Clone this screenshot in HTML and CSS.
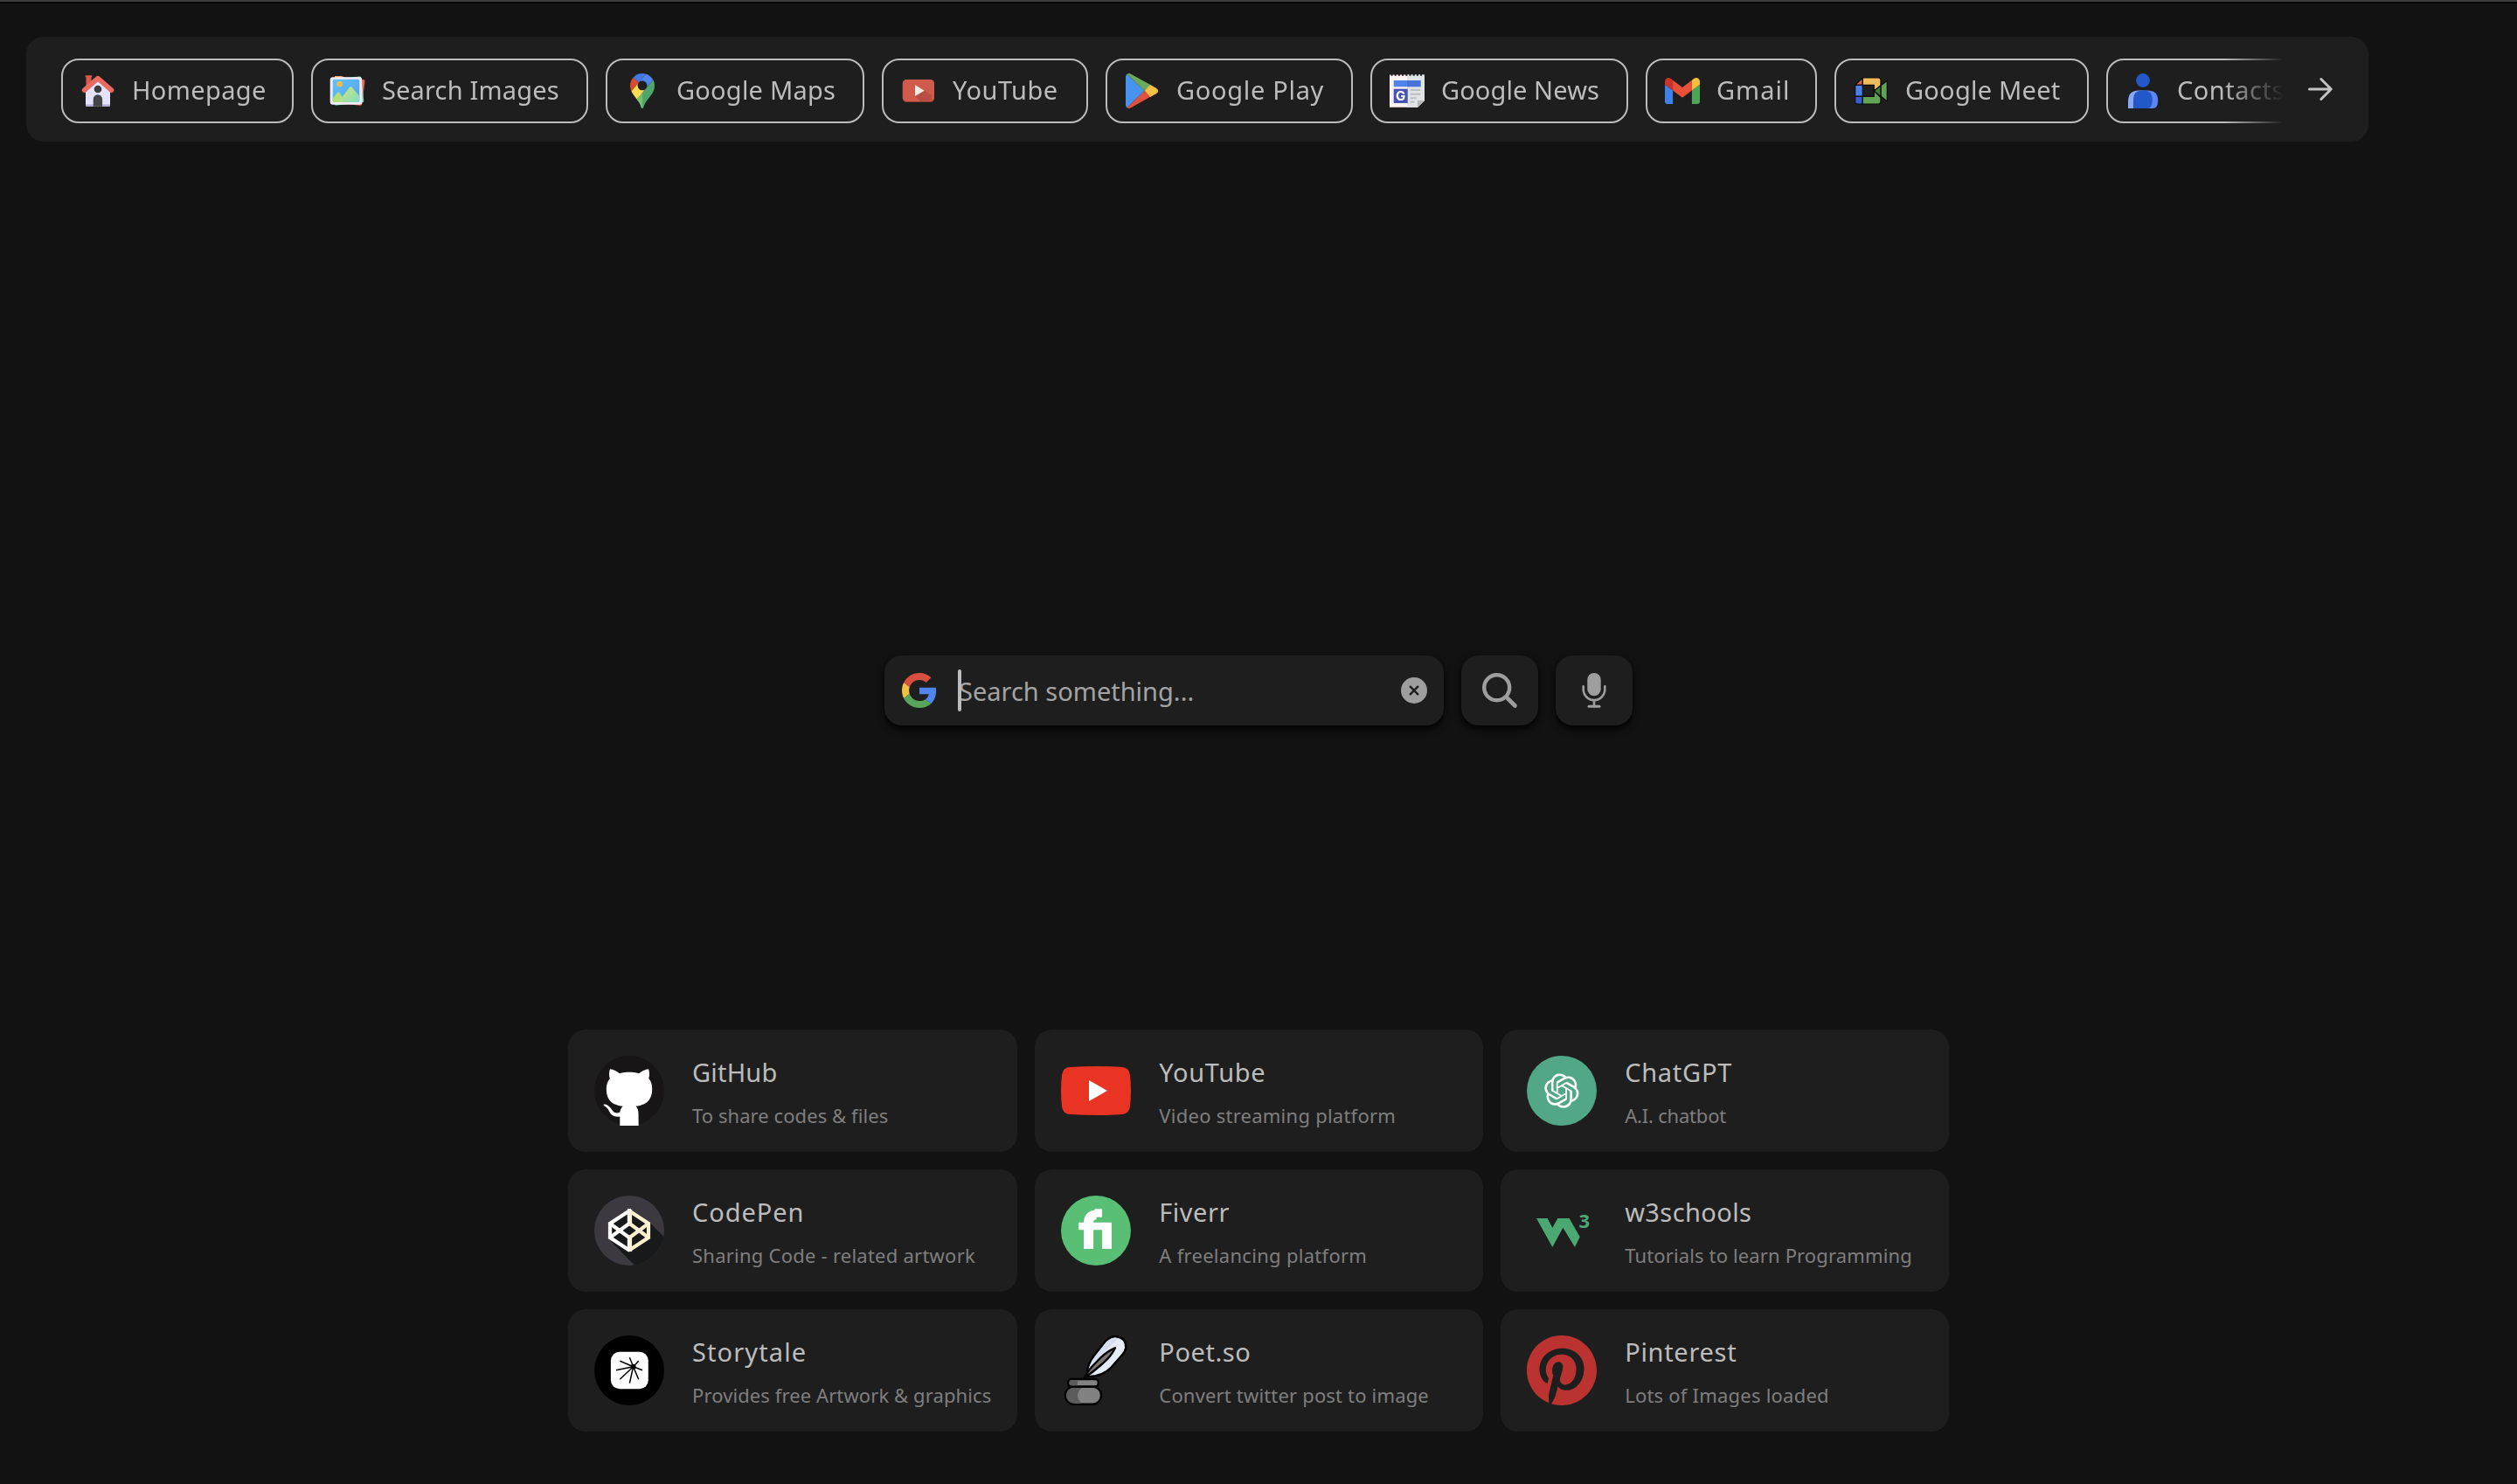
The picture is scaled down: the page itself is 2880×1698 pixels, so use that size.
FILE: index.html
```html
<!DOCTYPE html>
<html lang="en">
<head>
<meta charset="utf-8">
<title>New Tab</title>
<link rel="stylesheet" href="styles.css">
</head>
<body>
<nav class="shortcuts">
  <div class="shortcut-track">
    <a class="pill pill-home">
      <svg class="pill-icon" viewBox="0 0 40 40">
        <path fill="#d9584d" d="M5.7 2.3h7.6v2H12.500v11h-6v-11h-.8z"/>
        <path fill="#e4e2fd" d="M6 17 20 7l14 10v19.500q0 1.200-1.200 1.200H7.200Q6 37.700 6 36.500z"/>
        <path fill="#b3b1d6" d="M6 35.500h28v1q0 1.200-1.200 1.200H7.200Q6 37.700 6 36.500z"/>
        <circle cx="20" cy="18" r="4.300" fill="#3d3d40"/>
        <path fill="#454547" d="M14.700 37.700V29.500a5.200 5.200 0 0 1 10.400 0v8.200z"/>
        <path fill="none" stroke="#e96a5f" stroke-width="5.600" stroke-linecap="round" stroke-linejoin="round" d="M4.600 19.200 20 5.600l15.500 13.600"/>
      </svg>
      <span class="pill-label">Homepage</span>
    </a>
    <a class="pill pill-images">
      <svg class="pill-icon" viewBox="0 0 40 40">
        <defs><linearGradient id="sky" x1="0" y1="0" x2="1" y2="1"><stop offset="0" stop-color="#5fc4f6"/><stop offset="1" stop-color="#559ff0"/></linearGradient>
        <linearGradient id="hill" x1="0" y1="0" x2="1" y2="1"><stop offset="0" stop-color="#d9e66e"/><stop offset="1" stop-color="#7fdcc6"/></linearGradient></defs>
        <rect x="4" y="5" width="34" height="30" rx="2" fill="#e5694f" transform="rotate(7 21 20)"/>
        <rect x="3" y="5" width="34" height="30" rx="2" fill="#84d8b4" transform="rotate(-6 21 20)"/>
        <path fill="#f0a45e" d="M5 3h8l4 2H5z"/>
        <rect x="-.3" y="4.300" width="36.500" height="31.400" rx="3" fill="#f1ecfb"/>
        <rect x="2.700" y="6.700" width="30.600" height="26.300" rx="1.500" fill="url(#sky)"/>
        <circle cx="10.700" cy="12.300" r="3.300" fill="#f6b94b"/>
        <path fill="#b4e07c" d="M2.700 28.500 8 22q1.200-1.200 2.400 0L18 33H4.200q-1.500 0-1.500-1.500z"/>
        <path fill="url(#hill)" d="m9 33 12.800-17q1.500-1.600 3 0l8.500 10v5.500q0 1.500-1.500 1.500z"/>
      </svg>
      <span class="pill-label">Search Images</span>
    </a>
    <a class="pill pill-maps">
      <svg class="pill-icon" viewBox="0 0 92.300 132.300">
        <path fill="#4378e0" d="M60.200 2.200C55.800.8 51 0 46.100 0 32 0 19.300 6.400 10.800 16.500l21.800 18.300L60.200 2.200z"/>
        <path fill="#d84b2c" d="M10.800 16.500C4.100 24.500 0 34.900 0 46.100c0 8.700 1.700 15.700 4.600 22l28-33.300-21.800-18.300z"/>
        <path fill="#4f85ec" d="M46.200 28.500c9.800 0 17.700 7.900 17.700 17.700 0 4.300-1.600 8.300-4.200 11.400 0 0 13.900-16.600 27.500-32.700-5.600-10.800-15.300-19-27-22.700L32.600 34.800c3.300-3.800 8.100-6.300 13.600-6.300"/>
        <path fill="#fadb55" d="M46.200 63.800c-9.800 0-17.700-7.900-17.700-17.700 0-4.300 1.500-8.300 4.100-11.300l-28 33.300c4.800 10.600 12.800 19.200 21 29.900l34.100-40.500c-3.300 3.900-8.100 6.300-13.500 6.300"/>
        <path fill="#4fa56a" d="M59.100 109.200c15.400-24.100 33.300-35 33.300-63 0-7.700-1.900-14.900-5.200-21.300L25.600 98c2.600 3.400 5.300 7.300 7.900 11.300 9.400 14.500 6.800 23.100 12.800 23.100s3.400-8.700 12.800-23.200"/>
        <path fill="#79c06c" d="M25.600 98 46.300 73.500v58.900c-6 0-3.400-8.600-12.800-23.100-2.600-4-5.300-7.900-7.900-11.300z"/>
      </svg>
      <span class="pill-label">Google Maps</span>
    </a>
    <a class="pill pill-youtube">
      <svg class="pill-icon" viewBox="0 0 40 40">
        <rect x="1.800" y="8" width="36.200" height="25" rx="4.500" fill="#8e3b32"/>
        <rect x="1.800" y="7" width="36.200" height="25" rx="4.500" fill="#d05a4b"/>
        <path fill="#b94f42" d="M26.600 19.700 35 25v7H22l-6-6z"/>
        <path fill="#f5ece4" d="m16 13.300 10.600 6.400L16 26z"/>
      </svg>
      <span class="pill-label">YouTube</span>
    </a>
    <a class="pill pill-play">
      <svg class="pill-icon" viewBox="0 0 40 40">
        <path fill="#4893ee" d="M2.500.8 22.700 19.700 2.500 39.200Q1 38 1 35.500v-31Q1 2 2.500.8z"/>
        <path fill="#6aab5b" d="M2.500.8Q4.500-.6 7 .8l22.800 12.400-7.100 6.500z"/>
        <path fill="#df5240" d="M2.500 39.200q2 1.400 4.500 0l22.800-12.600-7.100-6.900z"/>
        <path fill="#f4c044" d="m29.300 12.900 6.500 3.800q5 3.300 0 6.600l-6.500 3.600-6.600-7.200z"/>
      </svg>
      <span class="pill-label">Google Play</span>
    </a>
    <a class="pill pill-news">
      <svg class="pill-icon" viewBox="0 0 40 40">
        <path fill="#fdf3f2" d="M0 1.500h40v29.500l-8 7.700H0z"/>
        <path fill="#e0e4e7" d="M20 1.500h20v29.500l-8 7.700H20z"/>
        <path stroke="#1e1e1e" stroke-width="2" stroke-dasharray="2 2.200" d="M1.500 1.800h38"/>
        <path fill="#5284ec" d="M4.700 8h15.300v7.300H4.700z"/><path fill="#4873d6" d="M20 8h15.700v7.300H20z"/>
        <path fill="#4453b4" d="M4.700 17.700h16V34h-16z"/>
        <path fill="#bcbfc2" d="M23.700 18h11.600v2H23.700zm0 4.700h11.600v2H23.700zm0 4.500h7v2h-7zm0 4.600h4.600v2h-4.600z"/>
        <path fill="#b5b9bc" d="M32 38.700V31h8z"/>
        <text class="news-mark" x="12.700" y="31.300" text-anchor="middle">G</text>
      </svg>
      <span class="pill-label">Google News</span>
    </a>
    <a class="pill pill-gmail">
      <svg class="pill-icon" viewBox="52 42 88 66">
        <path fill="#3f80ea" d="M58 108h14V74L52 59v43c0 3.320 2.690 6 6 6"/>
        <path fill="#4fa557" d="M120 108h14c3.320 0 6-2.690 6-6V59l-20 15"/>
        <path fill="#f4bf3d" d="M120 48v26l20-15v-8c0-7.420-8.470-11.650-14.400-7.200"/>
        <path fill="#e9503a" d="M72 74V48l24 18 24-18v26L96 92"/>
        <path fill="#c93529" d="M52 51v8l20 15V48l-5.600-4.200c-5.940-4.450-14.400-.22-14.400 7.200"/>
      </svg>
      <span class="pill-label">Gmail</span>
    </a>
    <a class="pill pill-meet">
      <svg class="pill-icon" viewBox="0 0 40 40">
        <g stroke="#0b0b0b" stroke-width="1.200" stroke-linejoin="round">
          <path fill="#d9634c" d="M1.700 13.300 10.300 5v8.300z"/>
          <path fill="#eebc5a" d="M10.300 5h18q2.700 0 2.700 2.700v6.800L23.300 20v-6.700h-13z"/>
          <path fill="#4a80ec" d="M1.700 13.300h8.600v13H1.700z"/>
          <path fill="#3560cb" d="M1.700 26.300h8.600V35H4q-2.300 0-2.300-2.300z"/>
          <path fill="#62a456" d="M10.300 26.300h13V20L31 27.500v4.800q0 2.700-2.700 2.700h-18z"/>
          <path fill="#62a456" d="m31 14 7.300-5.700V32L31 26z"/>
          <path fill="#437b3a" d="M23.300 20 31 13.800v12.700z"/>
        </g>
      </svg>
      <span class="pill-label">Google Meet</span>
    </a>
    <a class="pill pill-contacts">
      <svg class="pill-icon" viewBox="0 0 40 40">
        <circle cx="20" cy="8" r="7.900" fill="#2458c8"/>
        <path fill="#8aa8f8" d="M3 40v-8Q3 19.600 15.500 19.600H20V40z"/>
        <path fill="#5b86f4" d="M20 19.600h5q12.200 0 12.200 11.400 0 9-6.200 9H20z"/>
        <path fill="#2458c8" d="M9 40V29.500q0-10.100 10-10.100h2q9.800 0 9.800 10.100 0 10.500-5 10.500z"/>
      </svg>
      <span class="pill-label">Contacts</span>
    </a>
  </div>
  <svg class="next-arrow" viewBox="0 0 28 28"><path fill="none" stroke="#c4c4c4" stroke-width="3" stroke-linecap="round" stroke-linejoin="round" d="M1.500 14h24.500M14.800 2.500 26.300 14 14.800 25.500"/></svg>
</nav>

<main>
  <form class="search">
    <div class="search-box">
      <svg class="google-mark" viewBox="0 0 48 48">
        <path fill="#da5040" d="M24 9.500c3.540 0 6.710 1.220 9.210 3.600l6.850-6.850C35.900 2.380 30.470 0 24 0 14.620 0 6.510 5.380 2.560 13.220l7.980 6.190C12.430 13.720 17.740 9.500 24 9.500z"/>
        <path fill="#4f85ec" d="M46.980 24.550c0-1.570-.15-3.090-.38-4.550H24v9.020h12.940c-.58 2.960-2.260 5.480-4.780 7.180l7.730 6c4.510-4.180 7.090-10.360 7.090-17.650z"/>
        <path fill="#f2bf42" d="M10.530 28.590c-.48-1.450-.76-2.990-.76-4.590s.27-3.140.76-4.590l-7.980-6.190C.92 16.460 0 20.120 0 24c0 3.880.92 7.540 2.560 10.780l7.970-6.190z"/>
        <path fill="#58a55c" d="M24 48c6.480 0 11.930-2.130 15.890-5.810l-7.730-6c-2.150 1.450-4.920 2.300-8.160 2.300-6.260 0-11.570-4.220-13.470-9.910l-7.980 6.190C6.510 42.620 14.620 48 24 48z"/>
      </svg>
      <span class="search-field"><span class="caret"></span>Search something...</span>
      <svg class="clear" viewBox="0 0 30 30"><circle cx="15" cy="15" r="15" fill="#9e9e9e"/><path stroke="#1e1e1e" stroke-width="2.400" stroke-linecap="round" d="m10.700 10.700 8.600 8.600m0-8.600-8.600 8.600"/></svg>
    </div>
    <a class="tool"><svg viewBox="0 0 40 40"><circle cx="16.700" cy="16.700" r="14.500" fill="none" stroke="#9e9e9e" stroke-width="4.400"/><path stroke="#9e9e9e" stroke-width="4.600" stroke-linecap="round" d="m27.500 27.500 10 10"/></svg></a>
    <a class="tool"><svg viewBox="0 0 40 40"><rect x="12.300" y="0" width="15.400" height="26.300" rx="7.700" fill="#9e9e9e"/><path fill="none" stroke="#9e9e9e" stroke-width="2.600" stroke-linecap="round" d="M7.700 15.300v3.500a12.300 12.300 0 0 0 24.600 0v-3.500M20 31v7"/><path stroke="#9e9e9e" stroke-width="3" stroke-linecap="round" d="M14 38.200h12"/></svg></a>
  </form>

  <section class="cards">
    <a class="card card-github">
      <svg class="card-icon" viewBox="0 0 80 80"><circle cx="40" cy="40" r="40" fill="#171516"/>
        <path fill="#fff" d="M18 15.300C22 15.600 26 18 29 20.200 36 18.300 44 18.300 51 20.200 54 18 58 15.600 62 15.300c1.500 3.700 1.300 7.700.3 10.700 2.700 3 3.900 7 3.900 12 0 14-8.200 18.500-18.700 19.800 2 2.200 3 4.700 3 8.200l.2 14H29.300V69.500C23 70.500 19 68 17 63.500 15.500 60 13.500 58.500 11 57c-1.500-1.500 1-2.200 4-.5 3.500 2 5 5.500 7 7.500 2.500 2 5 1.500 7.400.5.200-3 1.600-5 3.300-6.700C22 56.500 13.800 52 13.800 38c0-5 1.500-9 4-12-1-3-1.200-7 .2-10.700z"/></svg>
      <span class="card-text"><strong>GitHub</strong><small>To share codes &amp; files</small></span>
    </a>
    <a class="card card-yt">
      <svg class="card-icon" viewBox="0 0 80 80"><path fill="#e93323" d="M10 13Q40 11 70 13q8 .6 9 9 2 18 0 36-1 8.400-9 9-30 2-60 0-8-.6-9-9-2-18 0-36 1-8.400 9-9z"/><path fill="#fff" d="m32 28 21 12-21 12z"/></svg>
      <span class="card-text"><strong>YouTube</strong><small>Video streaming platform</small></span>
    </a>
    <a class="card card-gpt">
      <svg class="card-icon" viewBox="0 0 80 80"><circle cx="40" cy="40" r="40" fill="#52a886"/>
        <path fill="#fff" transform="translate(20.200 20.400) scale(1.640)" d="M22.2819 9.8211a5.9847 5.9847 0 0 0-.5157-4.9108 6.0462 6.0462 0 0 0-6.5098-2.9A6.0651 6.0651 0 0 0 4.9807 4.1818a5.9847 5.9847 0 0 0-3.9977 2.9 6.0462 6.0462 0 0 0 .7427 7.0966 5.98 5.98 0 0 0 .511 4.9107 6.051 6.051 0 0 0 6.5146 2.9001A5.9847 5.9847 0 0 0 13.2599 24a6.0557 6.0557 0 0 0 5.7718-4.2058 5.9894 5.9894 0 0 0 3.9977-2.9001 6.0557 6.0557 0 0 0-.7475-7.0729zm-9.022 12.6081a4.4755 4.4755 0 0 1-2.8764-1.0408l.1419-.0804 4.7783-2.7582a.7948.7948 0 0 0 .3927-.6813v-6.7369l2.02 1.1686a.071.071 0 0 1 .038.052v5.5826a4.504 4.504 0 0 1-4.4945 4.4944zm-9.6607-4.1254a4.4708 4.4708 0 0 1-.5346-3.0137l.142.0852 4.783 2.7582a.7712.7712 0 0 0 .7806 0l5.8428-3.3685v2.3324a.0804.0804 0 0 1-.0332.0615L9.74 19.9502a4.4992 4.4992 0 0 1-6.1408-1.6464zM2.3408 7.8956a4.485 4.485 0 0 1 2.3655-1.9728V11.6a.7664.7664 0 0 0 .3879.6765l5.8144 3.3543-2.0201 1.1685a.0757.0757 0 0 1-.071 0l-4.8303-2.7865A4.504 4.504 0 0 1 2.3408 7.872zm16.5963 3.8558L13.1038 8.364 15.1192 7.2a.0757.0757 0 0 1 .071 0l4.8303 2.7913a4.4944 4.4944 0 0 1-.6765 8.1042v-5.6772a.79.79 0 0 0-.407-.667zm2.0107-3.0231l-.142-.0852-4.7735-2.7818a.7759.7759 0 0 0-.7854 0L9.409 9.2297V6.8974a.0662.0662 0 0 1 .0284-.0615l4.8303-2.7866a4.4992 4.4992 0 0 1 6.6802 4.66zM8.3065 12.863l-2.02-1.1638a.0804.0804 0 0 1-.038-.0567V6.0742a4.4992 4.4992 0 0 1 7.3757-3.4537l-.142.0805L8.704 5.459a.7948.7948 0 0 0-.3927.6813zm1.0976-2.3654l2.602-1.4998 2.6069 1.4998v2.9994l-2.5974 1.4997-2.6067-1.4997Z"/></svg>
      <span class="card-text"><strong>ChatGPT</strong><small>A.I. chatbot</small></span>
    </a>
    <a class="card card-codepen">
      <svg class="card-icon" viewBox="0 0 80 80"><defs><clipPath id="disc"><circle cx="40" cy="40" r="40"/></clipPath></defs>
        <circle cx="40" cy="40" r="40" fill="#3c3a40"/>
        <path fill="#18191b" clip-path="url(#disc)" d="M40 16 64 31.500l24 24V90H56L16 49V31z"/>
        <g fill="none" stroke-width="4.200"><path stroke="#fff" d="M40 17.500 18 32v16l22 14.500M40 15v17L18 48M18 32l22 16v16"/>
        <path stroke="#fdf1d0" d="M40 17.500 62 32v16L40 62.500M41 16v16.500L62 48M62 32 41 47.500V64"/></g>
        <path fill="#fff" d="M37.900 16.500 40 15.200v16.500l-2.100 1.500zM37.900 63.500l2.100 1.300V48l-2.100-1z"/></svg>
      <span class="card-text"><strong>CodePen</strong><small>Sharing Code - related artwork</small></span>
    </a>
    <a class="card card-fiverr">
      <svg class="card-icon" viewBox="0 0 80 80"><circle cx="40" cy="40" r="40" fill="#58bf74"/>
        <path fill="none" stroke="#fff" stroke-width="11" d="M31.600 61V31q0-9 9-9"/><path stroke="#fff" stroke-width="9.400" d="M38.500 20H47"/>
        <path stroke="#fff" stroke-width="8.600" d="M20.300 35H58"/><path stroke="#fff" stroke-width="11" d="M52.500 32v29"/></svg>
      <span class="card-text"><strong>Fiverr</strong><small>A freelancing platform</small></span>
    </a>
    <a class="card card-w3">
      <svg class="card-icon" viewBox="0 0 80 80"><path fill="#4ca872" d="M11 26h12.600l5.700 10.700L35.400 26h13.200l12.100 21.300L55 59 41.400 36.700 29.300 59z"/><text class="w3-mark" x="59.500" y="37.300">3</text></svg>
      <span class="card-text"><strong>w3schools</strong><small>Tutorials to learn Programming</small></span>
    </a>
    <a class="card card-storytale">
      <svg class="card-icon" viewBox="0 0 80 80"><circle cx="40" cy="40" r="40"/><rect x="18.900" y="18.700" width="42.900" height="42.600" rx="10" fill="#fff"/>
        <circle cx="44.600" cy="35.700" r="3"/><path stroke="#000" stroke-width="1.500" d="M44.600 35.700 40.400 25.300M44.600 35.700l6.100-6.400M44.600 35.700l10.400 4M44.600 35.700l6.100 14.600M44.600 35.700l-4.200 19M44.600 35.700 29.300 50.300M44.600 35.700l-19.600 4M44.600 35.700l-15.300-6.400"/></svg>
      <span class="card-text"><strong>Storytale</strong><small>Provides free Artwork &amp; graphics</small></span>
    </a>
    <a class="card card-poet">
      <svg class="card-icon" viewBox="0 0 80 80"><g stroke="#000" stroke-width="2.400" stroke-linejoin="round">
        <path fill="#e7edf6" d="M29.500 47Q30 33 38 23L51 6.500Q56.500 1 62.500 1.200 74.500 2 74.300 14q-.8 4.500-4.500 8.500L57.500 36.500Q47 47.500 29.500 47z"/>
        <path fill="#d7dfef" stroke="none" d="M31 43Q32 33 39 24L52 7.500Q57 2.800 62 2.500L66 3.500Q52 16 31 43z"/>
        <path fill="#77736f" d="M26.500 48.500Q31 39.500 41 30 52 18 62 14.300 57 25 45.500 34 36 42.500 26.500 48.500z"/>
        <rect x="5" y="58.500" width="41" height="20.300" rx="10" fill="#828282"/>
        <path fill="#5c5c5c" stroke="none" d="M24 59.700H15a9 9 0 0 0 0 18h9q-5-4-5-9t5-9z"/>
        <rect x="8.300" y="50" width="34.500" height="8.500" rx="3.500" fill="#828282"/>
        <path fill="#5c5c5c" stroke="none" d="M11.500 51.200H19v6.100h-7.500q-2 0-2-3t2-3.100z"/></g></svg>
      <span class="card-text"><strong>Poet.so</strong><small>Convert twitter post to image</small></span>
    </a>
    <a class="card card-pinterest">
      <svg class="card-icon" viewBox="0 8 496 496"><path fill="#ba3331" d="M496 256c0 137-111 248-248 248-25.600 0-50.200-3.900-73.400-11.100 10.100-16.500 25.200-43.500 30.800-65 3-11.600 15.400-59 15.400-59 8.100 15.400 31.700 28.500 56.800 28.500 74.800 0 128.700-68.800 128.700-154.300 0-81.900-66.900-143.200-152.900-143.200-107 0-163.900 71.800-163.900 150.100 0 36.400 19.400 81.700 50.300 96.100 4.700 2.200 7.200 1.200 8.300-3.300.8-3.400 5-20.300 6.900-28.100.6-2.500.3-4.700-1.700-7.100-10.100-12.500-18.300-35.300-18.300-56.600 0-54.700 41.400-107.600 112-107.600 60.900 0 103.600 41.500 103.600 100.900 0 67.100-33.900 113.600-78 113.600-24.300 0-42.600-20.100-36.700-44.800 7-29.500 20.500-61.300 20.500-82.600 0-19-10.200-34.900-31.400-34.900-24.900 0-44.900 25.700-44.900 60.200 0 22 7.400 36.800 7.400 36.800s-24.500 103.800-29 123.200c-5 21.400-3 51.600-.9 71.200C65.400 450.900 0 361.100 0 256 0 119 111 8 248 8s248 111 248 248z"/></svg>
      <span class="card-text"><strong>Pinterest</strong><small>Lots of Images loaded</small></span>
    </a>
  </section>
</main>
</body>
</html>
```
FILE: styles.css
```css
* { box-sizing: border-box; }

body {
  margin: 0;
  height: 1698px;
  overflow: hidden;
  background: #121212;
  border-top: 2px solid #3c3c3c;
  box-shadow: inset 0 2px 0 #050505;
  color: #bcbcbc;
  font-family: "Noto Sans", sans-serif;
  font-size: 29px;
}

svg { display: block; flex: none; overflow: visible; }

/* Shortcut bar */
.shortcuts {
  display: flex;
  align-items: center;
  width: 2680px;
  height: 120px;
  margin: 40px 0 0 30px;
  padding: 0 40px;
  border-radius: 20px;
  background: #1e1e1e;
}
.shortcut-track {
  display: flex;
  gap: 20px;
  width: 2545px;
  padding-bottom: 0;
  margin-top: 4px;
  overflow: hidden;
  -webkit-mask-image: linear-gradient(to right, #000 2475px, transparent 2543px);
  mask-image: linear-gradient(to right, #000 2475px, transparent 2543px);
}
.pill {
  display: flex;
  flex: none;
  align-items: center;
  gap: 19px;
  height: 74px;
  padding: 0 20px;
  border: 2px solid #bcbcbc;
  border-radius: 20px;
}
.pill-icon { width: 40px; height: 40px; }
.pill-label { padding-bottom: 4px; white-space: nowrap; }
.pill-home { width: 266px; letter-spacing: .37px; }
.pill-images { width: 317px; letter-spacing: .16px; }
.pill-maps { width: 296px; letter-spacing: .22px; }
.pill-youtube { width: 236px; letter-spacing: .5px; }
.pill-play { width: 283px; letter-spacing: .69px; }
.pill-news { width: 295px; letter-spacing: .1px; }
.pill-gmail { width: 196px; letter-spacing: 1px; }
.pill-meet { width: 291px; letter-spacing: .23px; }
.pill-contacts { width: 250px; letter-spacing: .5px; }
.news-mark { font: 700 15px "Inter", sans-serif; letter-spacing: 0; fill: #fff; }
.next-arrow { width: 28px; height: 28px; margin-left: 26px; }

/* Search */
.search {
  display: flex;
  justify-content: center;
  gap: 20px;
  margin-top: 588px;
}
.search-box, .tool {
  display: flex;
  align-items: center;
  height: 80px;
  border-radius: 20px;
  background: #1e1e1e;
  box-shadow: 0 4px 8px #000;
}
.search-box { width: 640px; padding: 0 19px 0 20px; }
.google-mark { width: 40px; height: 40px; }
.search-field {
  position: relative;
  flex: 1;
  margin-left: 24px;
  padding: 1px 0 0 1px;
  line-height: 48px;
  color: #a3a3a3;
}
.caret {
  position: absolute;
  left: 0;
  top: 0;
  width: 4px;
  height: 48px;
  border-radius: 2px;
  background: #bcbcbc;
}
.clear { width: 30px; height: 30px; }
.tool { width: 88px; justify-content: center; }
.tool svg { width: 40px; height: 40px; }

/* Site cards */
.cards {
  display: grid;
  grid-template-columns: repeat(3, 1fr);
  grid-auto-rows: 140px;
  gap: 20px;
  width: 1580px;
  margin: 348px auto 0;
}
.card {
  display: flex;
  padding: 30px;
  border-radius: 20px;
  background: #1e1e1e;
  white-space: nowrap;
}
.card-icon { width: 80px; height: 80px; }
.card-text { display: flex; flex-direction: column; gap: 7px; margin: -5px 0 0 32px; }
.card strong { font-weight: 400; line-height: 48px; }
.card small { font-size: 22px; line-height: 36px; color: #7e7e7e; }
.w3-mark { font: 700 22px "Noto Sans", sans-serif; fill: #4ca872; }

.card-github strong { letter-spacing: .2px; }
.card-github small { letter-spacing: .07px; }
.card-yt strong { letter-spacing: .68px; }
.card-yt small { letter-spacing: .25px; }
.card-gpt strong { letter-spacing: .73px; }
.card-gpt small { letter-spacing: -.2px; }
.card-codepen strong { letter-spacing: .93px; }
.card-codepen small { letter-spacing: .24px; }
.card-fiverr strong { letter-spacing: .5px; }
.card-fiverr small { letter-spacing: .29px; }
.card-w3 strong { letter-spacing: .4px; }
.card-w3 small { letter-spacing: .14px; }
.card-storytale strong { letter-spacing: 1.1px; }
.card-storytale small { letter-spacing: .1px; }
.card-poet strong { letter-spacing: .57px; }
.card-poet small { letter-spacing: .17px; }
.card-pinterest strong { letter-spacing: .7px; }
.card-pinterest small { letter-spacing: .22px; }
```
